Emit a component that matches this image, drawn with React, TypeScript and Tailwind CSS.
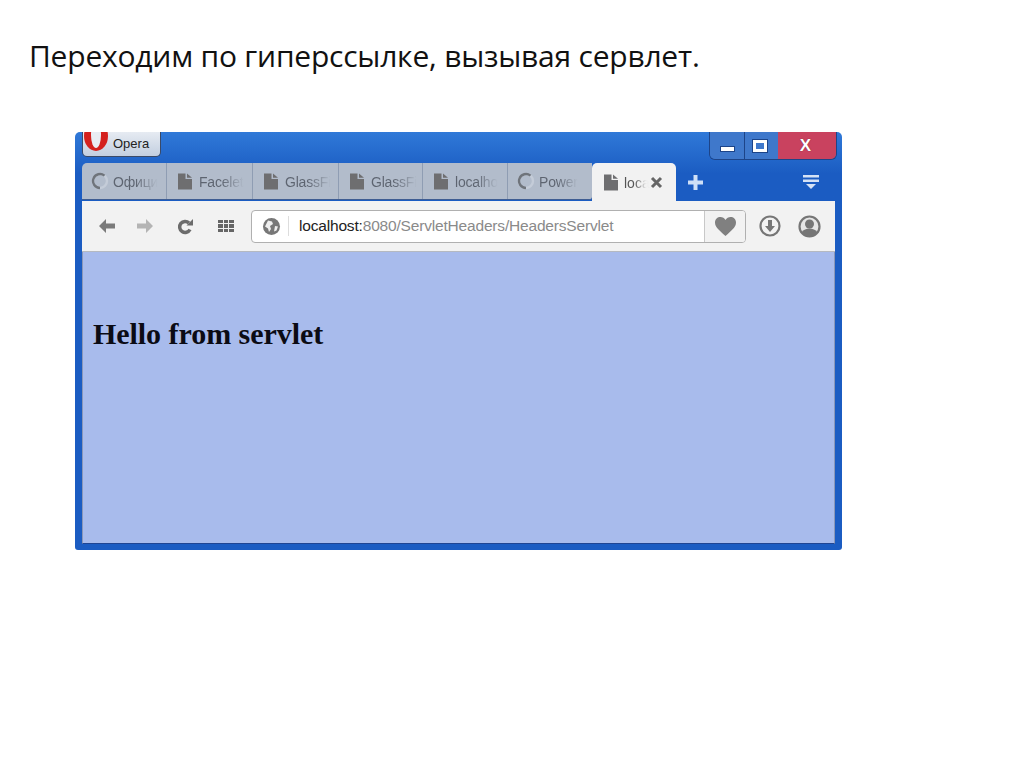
const tabs = [
  { label: "Офици", spin: true, w: "w-[85px]" },
  { label: "Facelet", spin: false, w: "w-[86px]" },
  { label: "GlassFi", spin: false, w: "w-[86px]" },
  { label: "GlassFi", spin: false, w: "w-[84px]" },
  { label: "localho", spin: false, w: "w-[85px]" },
  { label: "Power", spin: true, w: "w-[84px]" },
];

function Spinner() {
  return (
    <svg width="18" height="18" viewBox="0 0 18 18" className="shrink-0">
      <circle cx="9" cy="9" r="7" fill="none" stroke="#c4ccd8" strokeWidth="2.4" />
      <path d="M13.5 3.6A7 7 0 1 0 9 16" fill="none" stroke="#6f747b" strokeWidth="2.4" />
    </svg>
  );
}

function PageIcon() {
  return (
    <svg width="14" height="17" viewBox="0 0 14 17" className="shrink-0">
      <path d="M0 0.500h7.500v5.500H14v10.500H0z" fill="#6e6e70" />
      <path d="M9 0.500l5 4.200H9z" fill="#6e6e70" />
    </svg>
  );
}

function Tab({ label, spin, w }: { label: string; spin: boolean; w: string }) {
  return (
    <div className={`${w} h-full flex items-center border-r border-[#8f9db3] last:border-r-0 ${spin ? "gap-[4px] pl-[9px]" : "gap-[7px] pl-[11px]"}`}>
      {spin ? <Spinner /> : <PageIcon />}
      <span className="pt-[2px] text-[14px] tracking-[-0.2px] whitespace-nowrap bg-gradient-to-r from-[#5d6470] from-50% to-[#b3bdcc] bg-clip-text text-transparent">
        {label}
      </span>
    </div>
  );
}

export default function App() {
  return (
    <div className="w-[1024px] h-[767px] bg-white overflow-hidden font-['Liberation_Sans',sans-serif]">
      <h1 className="pl-[29px] pt-[37px] h-[132px] text-[30px] leading-[38px] text-[#111] font-['Open_Sans',sans-serif] tracking-[-0.22px]">
        Переходим по гиперссылке, вызывая сервлет.
      </h1>

      <div className="ml-[75px] w-[767px] h-[418px] rounded-t-[5px] rounded-b-[3px] bg-[#1f62c8] px-[7px] pb-[6px] flex flex-col bg-gradient-to-b from-[#3079d8] from-0% to-[#1b5cc2] to-[10%]">
        {/* title bar */}
        <div className="h-[31px] flex items-start justify-between shrink-0">
          <div className="w-[79px] h-[25px] rounded-b-[5px] border border-t-0 border-[#3a4a68] bg-gradient-to-b from-[#e6ebf2] to-[#c3cfe0] flex items-center overflow-hidden">
            <svg width="28" height="22" viewBox="0 0 28 22" className="-mt-[4px] shrink-0">
              <ellipse cx="13" cy="5" rx="12" ry="15" fill="#d4211e" />
              <ellipse cx="13" cy="4" rx="5" ry="13" fill="#e9edf3" />
            </svg>
            <span className="text-[13px] ml-[2px] text-[#222]">Opera</span>
          </div>
          <div className="mr-[-2px] w-[128px] h-[28px] rounded-b-[6px] border border-t-0 border-[#1d4488] flex overflow-hidden">
            <div className="w-[35px] bg-[#3f78cb] border-r border-[#1d4488] flex items-center justify-center">
              <div className="w-[15px] h-[6px] mt-[7px] bg-white border border-[#1d4488]" />
            </div>
            <div className="w-[33px] bg-[#3f78cb] flex items-center justify-center pr-[3px]">
              <div className="w-[14px] h-[12px] bg-[#3f78cb] border-[3px] border-white outline outline-1 outline-[#1d4488]" />
            </div>
            <div className="flex-1 bg-[#c9425f] flex items-center justify-center">
              <span className="text-white font-bold text-[17px] leading-none pr-[3px] [text-shadow:0_0_1px_#5a1a28]">X</span>
            </div>
          </div>
        </div>

        {/* tabs */}
        <div className="h-[38px] flex items-stretch shrink-0">
          <div className="flex h-[37px] bg-[#b2bccb] rounded-tl-[5px] rounded-br-[3px] border-b border-[#3f5d92]">
            {tabs.map((t, i) => (
              <Tab key={i} label={t.label} spin={t.spin} w={t.w} />
            ))}
          </div>
          <div className="w-[84px] bg-[#f2f2f2] rounded-t-[5px] flex items-center pl-[12px]">
            <PageIcon />
            <span className="pt-[2px] ml-[6px] w-[26px] whitespace-nowrap text-[14px] bg-gradient-to-r from-[#555] from-40% to-[#eee] to-85% bg-clip-text text-transparent">
              loca
            </span>
            <svg width="13" height="13" viewBox="0 0 13 13">
              <path d="M2 2l9 9M11 2l-9 9" stroke="#666" strokeWidth="3" />
            </svg>
          </div>
          <div className="flex-1 flex items-center justify-between pl-[12px] pr-[15px]">
            <svg width="15" height="15" viewBox="0 0 15 15">
              <path d="M5.500 0h4v5.500h5.500v4h-5.500v5.500h-4v-5.500h-5.500v-4h5.500z" fill="#cfe0f7" />
            </svg>
            <svg width="18" height="18" viewBox="0 0 18 18">
              <path d="M1 2h16v2.500H1zM1 6.500h16V9H1z" fill="#d5e2f5" />
              <path d="M4 11h10l-5 5z" fill="#d5e2f5" />
            </svg>
          </div>
        </div>

        {/* toolbar */}
        <div className="h-[51px] bg-[#f2f2f2] border-b border-[#b5b9c0] flex items-center shrink-0">
          <div className="w-[169px] flex items-center shrink-0 pl-[16px]">
            <svg width="18" height="14" viewBox="0 0 18 14">
              <path d="M8 0L1 7l7 7V9.500h9v-5H8z" fill="#7b7b7b" />
            </svg>
            <svg width="18" height="14" viewBox="0 0 18 14" className="ml-[20px]">
              <path d="M10 0l7 7-7 7V9.500H1v-5h9z" fill="#b4b4b4" />
            </svg>
            <svg width="17" height="17" viewBox="0 0 17 17" className="ml-[23px]">
              <path d="M13 11.500A5.500 5.500 0 1 1 12 5" fill="none" stroke="#6c6c6c" strokeWidth="3.500" />
              <path d="M9.500 7.500H16V1z" fill="#6c6c6c" />
            </svg>
            <div className="ml-[24px] grid grid-cols-3 gap-[1px]">
              {[0, 1, 2, 3, 4, 5, 6, 7, 8].map((n) => (
                <div key={n} className="w-[4.500px] h-[3.500px] bg-[#666]" />
              ))}
            </div>
          </div>
          <div className="w-[495px] h-[33px] rounded-[4px] border border-[#b0b0b0] bg-white flex items-center shrink-0 overflow-hidden">
            <svg width="19" height="19" viewBox="0 0 19 19" className="ml-[10px] shrink-0">
              <circle cx="9.500" cy="9.500" r="8.500" fill="#777" />
              <path d="M6 3.500l4 1 1 2.500-3 2 1 3-2 3-1-3.500-3-2zM13 9l3 .5-1.500 4-2.500 1z" fill="#eee" />
            </svg>
            <div className="w-px h-[20px] bg-[#ddd] ml-[7px] shrink-0" />
            <div className="flex-1 pl-[10px] text-[15.500px] tracking-[-0.18px] text-[#8a8a8a] whitespace-nowrap">
              <span className="text-[#222]">localhost:</span>8080/ServletHeaders/HeadersServlet
            </div>
            <div className="w-[41px] h-full bg-[#f2f2f2] border-l border-[#c8c8c8] flex items-center justify-center shrink-0">
              <svg width="21" height="19" viewBox="0 0 21 19">
                <path d="M10.500 19C4 13 0 10 0 5.500 0 2 2.500 0 5.500 0c2 0 4 1 5 3 1-2 3-3 5-3C18.500 0 21 2 21 5.500 21 10 17 13 10.500 19z" fill="#808080" />
              </svg>
            </div>
          </div>
          <div className="flex-1 flex items-center pl-[13px]">
            <svg width="22" height="22" viewBox="0 0 22 22">
              <circle cx="11" cy="11" r="9.500" fill="none" stroke="#767676" strokeWidth="2.200" />
              <path d="M9 5h4v6h3l-5 6-5-6h3z" fill="#767676" />
            </svg>
            <svg width="23" height="23" viewBox="0 0 23 23" className="ml-[17px]">
              <circle cx="11.500" cy="11.500" r="10" fill="#e6e6e6" stroke="#767676" strokeWidth="2.200" />
              <circle cx="11.500" cy="9" r="4.500" fill="#767676" />
              <path d="M3.500 17.500c2-3 5-4 8-4s6 1 8 4a10 10 0 0 1-16 0z" fill="#767676" />
            </svg>
          </div>
        </div>

        {/* page */}
        <div className="flex-1 bg-[#a8bbec] border border-t-0 border-[#8a97b8] border-b-[#1f4593] pl-[10px] pt-[64px]">
          <div className="font-['Liberation_Serif',serif] font-bold text-[30px] leading-[36px] tracking-[-0.05px] text-[#0b0b14]">
            Hello from servlet
          </div>
        </div>
      </div>
    </div>
  );
}
